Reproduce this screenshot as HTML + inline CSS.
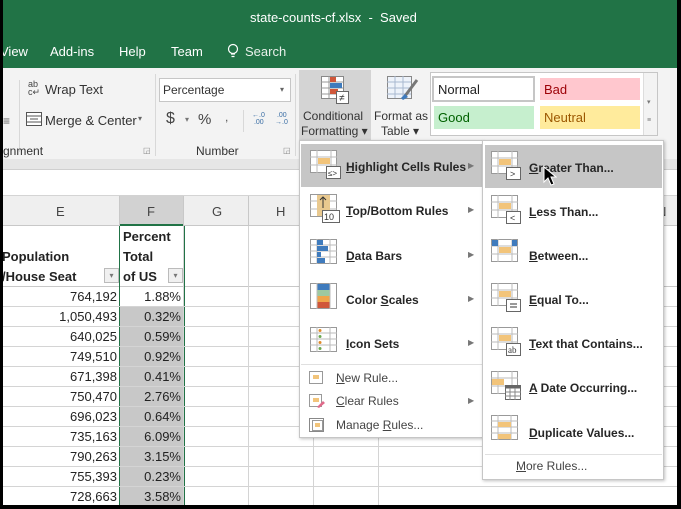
<!DOCTYPE html>
<html><head><meta charset="utf-8"><style>
*{margin:0;padding:0;box-sizing:border-box}
body{width:681px;height:509px;overflow:hidden;background:#000;font-family:"Liberation Sans",sans-serif;position:relative}
.a{position:absolute}
.t{position:absolute;white-space:nowrap}
.menu .t{font-size:12px;color:#262626}
.b{font-weight:bold}
u{text-decoration:underline}
.ic{position:absolute;width:32px;height:30px}
.arr{position:absolute;font-size:8px;color:#777}
</style></head><body>
<div class="a" style="left:3px;top:0;width:674px;height:505px;background:#fff;overflow:hidden">
<!-- title bar -->
<div class="a" style="left:0;top:0;width:674px;height:68px;background:#217346"></div>
<div class="t" style="left:247px;top:10px;color:#fff;font-size:13px">state-counts-cf.xlsx &nbsp;-&nbsp; Saved</div>
<div class="t" style="left:-3px;top:44px;color:#fff;font-size:13px">View</div>
<div class="t" style="left:47px;top:44px;color:#fff;font-size:13px">Add-ins</div>
<div class="t" style="left:116px;top:44px;color:#fff;font-size:13px">Help</div>
<div class="t" style="left:168px;top:44px;color:#fff;font-size:13px">Team</div>
<svg class="a" style="left:224px;top:43px" width="12" height="16"><circle cx="6" cy="6" r="4.5" fill="none" stroke="#fff" stroke-width="1.2"/><path d="M4 11h4M4.5 13.5h3" stroke="#fff" stroke-width="1.2"/></svg>
<div class="t" style="left:242px;top:44px;color:#e8f0ea;font-size:13px">Search</div>
<!-- ribbon -->
<div class="a" style="left:0;top:68px;width:674px;height:91px;background:#f3f3f3"></div>
<div class="a" style="left:16px;top:80px;width:1px;height:72px;background:#d8d8d8"></div>
<div class="a" style="left:152px;top:74px;width:1px;height:82px;background:#d8d8d8"></div>
<div class="a" style="left:292px;top:74px;width:1px;height:82px;background:#d8d8d8"></div>
<div class="t" style="left:0;top:114px;font-size:12px;color:#666">≡</div>
<div class="t" style="left:25px;top:80px;font-size:9px;color:#444;line-height:8px">ab<br>c↵</div>
<div class="t" style="left:42px;top:82px;font-size:13px;color:#333">Wrap Text</div>
<svg class="a" style="left:23px;top:112px" width="16" height="14"><rect x="0.5" y="0.5" width="15" height="13" fill="#fff" stroke="#555"/><path d="M0 4h16M0 10h16M4 7h8" stroke="#555"/></svg>
<div class="t" style="left:42px;top:113px;font-size:13px;color:#333">Merge &amp; Center</div>
<div class="t" style="left:135px;top:114px;font-size:8px;color:#666">▾</div>
<div class="t" style="left:0;top:144px;font-size:12px;color:#333">gnment</div>
<div class="t" style="left:140px;top:146px;font-size:8px;color:#888">◲</div>
<div class="a" style="left:156px;top:78px;width:132px;height:24px;background:#fff;border:1px solid #c6c6c6"></div>
<div class="t" style="left:160px;top:83px;font-size:12px;color:#333">Percentage</div>
<div class="t" style="left:277px;top:85px;font-size:8px;color:#666">▾</div>
<div class="t" style="left:163px;top:110px;font-size:16px;color:#444">$</div>
<div class="t" style="left:182px;top:115px;font-size:8px;color:#777">▾</div>
<div class="t" style="left:195px;top:111px;font-size:15px;color:#444">%</div>
<div class="t" style="left:222px;top:110px;font-size:12px;color:#555">,</div>
<div class="a" style="left:240px;top:110px;width:1px;height:22px;background:#d8d8d8"></div>
<div class="t" style="left:249px;top:112px;font-size:7px;color:#3a6ea5;line-height:7px">←.0<br>&nbsp;.00</div>
<div class="t" style="left:272px;top:112px;font-size:7px;color:#3a6ea5;line-height:7px">&nbsp;.00<br>→.0</div>
<div class="t" style="left:193px;top:144px;font-size:12px;color:#333">Number</div>
<div class="t" style="left:280px;top:146px;font-size:8px;color:#888">◲</div>
<!-- cond formatting button -->
<div class="a" style="left:296px;top:70px;width:72px;height:72px;background:#d4d4d4"></div>
<svg class="a" style="left:318px;top:76px" width="32" height="30"><rect x="0.5" y="0.5" width="22" height="22" fill="#fff" stroke="#888"/><path d="M0 6h22M0 12h22M0 18h22M8 0v22" stroke="#999"/><rect x="9" y="1" width="6" height="5" fill="#d0573a"/><rect x="9" y="7" width="12" height="5" fill="#3f7bbd"/><rect x="9" y="13" width="8" height="5" fill="#d0573a"/><rect x="15.5" y="15.5" width="12" height="12" fill="#fff" stroke="#666"/><text x="18" y="25" font-size="10" fill="#333" font-family="Liberation Sans">≠</text></svg>
<div class="t" style="left:300px;top:109px;font-size:12px;color:#333">Conditional</div>
<div class="t" style="left:298px;top:124px;font-size:12px;color:#333">Formatting ▾</div>
<svg class="a" style="left:384px;top:76px" width="32" height="30"><rect x="0.5" y="0.5" width="24" height="22" fill="#eef3fa" stroke="#888"/><path d="M0 6h24M0 12h24M0 18h24M8 0v22M16 0v22" stroke="#a8b8d0"/><path d="M30 4L18 20" stroke="#777" stroke-width="3"/><path d="M14 22l4-4 3 3-5 3z" fill="#3f7bbd"/></svg>
<div class="t" style="left:371px;top:109px;font-size:12px;color:#333">Format as</div>
<div class="t" style="left:378px;top:124px;font-size:12px;color:#333">Table ▾</div>
<!-- styles gallery -->
<div class="a" style="left:427px;top:72px;width:228px;height:64px;background:#fff;border:1px solid #c6c6c6"></div>
<div class="a" style="left:429px;top:76px;width:103px;height:26px;background:#fff;border:2px solid #c6c6c6"></div>
<div class="t" style="left:435px;top:82px;font-size:13px;color:#222">Normal</div>
<div class="a" style="left:537px;top:78px;width:100px;height:22px;background:#ffc7ce"></div>
<div class="t" style="left:541px;top:82px;font-size:13px;color:#9c0006">Bad</div>
<div class="a" style="left:431px;top:106px;width:100px;height:23px;background:#c6efce"></div>
<div class="t" style="left:435px;top:110px;font-size:13px;color:#006100">Good</div>
<div class="a" style="left:537px;top:106px;width:100px;height:23px;background:#ffeb9c"></div>
<div class="t" style="left:541px;top:110px;font-size:13px;color:#9c5700">Neutral</div>
<div class="a" style="left:640px;top:73px;width:14px;height:62px;background:#f3f3f3;border-left:1px solid #ddd"></div>
<div class="t" style="left:644px;top:98px;font-size:7px;color:#777">▾</div>
<div class="t" style="left:644px;top:117px;font-size:7px;color:#777">≡</div>
<!-- bands -->
<div class="a" style="left:0;top:159px;width:674px;height:11px;background:#e6e6e6;border-bottom:1px solid #cfcfcf"></div>
<div class="a" style="left:0;top:195px;width:674px;height:31px;background:#efefef;border-top:1px solid #d4d4d4;border-bottom:1px solid #c8c8c8"></div>
<div class="a" style="left:116px;top:195px;width:64px;height:31px;background:#d2d2d2;border-bottom:2px solid #217346"></div>
<div class="t" style="left:53px;top:204px;font-size:13px;color:#444">E</div>
<div class="t" style="left:144px;top:204px;font-size:13px;color:#444">F</div>
<div class="t" style="left:209px;top:204px;font-size:13px;color:#444">G</div>
<div class="t" style="left:273px;top:204px;font-size:13px;color:#444">H</div>
<div class="a" style="left:180px;top:196px;width:1px;height:30px;background:#c8c8c8"></div>
<div class="a" style="left:245px;top:196px;width:1px;height:30px;background:#c8c8c8"></div>
<div class="a" style="left:116px;top:196px;width:1px;height:30px;background:#c8c8c8"></div>
<!-- header cell -->
<div class="t b" style="left:-1px;top:249px;font-size:13px;color:#222">Population</div>
<div class="t b" style="left:-1px;top:269px;font-size:13px;color:#222">/House Seat</div>
<div class="a" style="left:101px;top:268px;width:15px;height:15px;background:#f0f0f0;border:1px solid #bbb;font-size:8px;color:#777;text-align:center;line-height:13px">▾</div>
<div class="t b" style="left:120px;top:229px;font-size:13px;color:#222">Percent</div>
<div class="t b" style="left:120px;top:249px;font-size:13px;color:#222">Total</div>
<div class="t b" style="left:120px;top:269px;font-size:13px;color:#222">of US</div>
<div class="a" style="left:165px;top:268px;width:15px;height:15px;background:#f0f0f0;border:1px solid #bbb;font-size:8px;color:#777;text-align:center;line-height:13px">▾</div>
<div class="a" style="left:0;top:286px;width:674px;height:1px;background:#c8c8c8"></div>
<!-- grid -->
<div id="g"></div>
<div class="a" style="left:116px;top:226px;width:1px;height:280px;background:#217346"></div>
<div class="a" style="left:180px;top:226px;width:2px;height:280px;background:#217346"></div>
<div class="a" style="left:180px;top:226px;width:1px;height:280px;background:#d4d4d4"></div>
<div class="a" style="left:245px;top:226px;width:1px;height:280px;background:#d4d4d4"></div>
<div class="a" style="left:117px;top:306px;width:63px;height:200px;background:#c8c8c8"></div>
<div style="position:absolute;left:0;top:287px;width:182px;font-size:13px;color:#222">
<div style="height:20px;border-bottom:1px solid #d4d4d4;position:relative"><span class="t" style="right:68px;top:2px">764,192</span><span class="t" style="right:4px;top:2px">1.88%</span></div>
<div style="height:20px;border-bottom:1px solid #d4d4d4;position:relative"><span class="t" style="right:68px;top:2px">1,050,493</span><span class="t" style="right:4px;top:2px">0.32%</span></div>
<div style="height:20px;border-bottom:1px solid #d4d4d4;position:relative"><span class="t" style="right:68px;top:2px">640,025</span><span class="t" style="right:4px;top:2px">0.59%</span></div>
<div style="height:20px;border-bottom:1px solid #d4d4d4;position:relative"><span class="t" style="right:68px;top:2px">749,510</span><span class="t" style="right:4px;top:2px">0.92%</span></div>
<div style="height:20px;border-bottom:1px solid #d4d4d4;position:relative"><span class="t" style="right:68px;top:2px">671,398</span><span class="t" style="right:4px;top:2px">0.41%</span></div>
<div style="height:20px;border-bottom:1px solid #d4d4d4;position:relative"><span class="t" style="right:68px;top:2px">750,470</span><span class="t" style="right:4px;top:2px">2.76%</span></div>
<div style="height:20px;border-bottom:1px solid #d4d4d4;position:relative"><span class="t" style="right:68px;top:2px">696,023</span><span class="t" style="right:4px;top:2px">0.64%</span></div>
<div style="height:20px;border-bottom:1px solid #d4d4d4;position:relative"><span class="t" style="right:68px;top:2px">735,163</span><span class="t" style="right:4px;top:2px">6.09%</span></div>
<div style="height:20px;border-bottom:1px solid #d4d4d4;position:relative"><span class="t" style="right:68px;top:2px">790,263</span><span class="t" style="right:4px;top:2px">3.15%</span></div>
<div style="height:20px;border-bottom:1px solid #d4d4d4;position:relative"><span class="t" style="right:68px;top:2px">755,393</span><span class="t" style="right:4px;top:2px">0.23%</span></div>
<div style="height:20px;position:relative"><span class="t" style="right:68px;top:2px">728,663</span><span class="t" style="right:4px;top:2px">3.58%</span></div>
</div>
<div style="position:absolute;left:182px;top:287px;width:492px">
<div style="height:20px;border-bottom:1px solid #d4d4d4"></div><div style="height:20px;border-bottom:1px solid #d4d4d4"></div><div style="height:20px;border-bottom:1px solid #d4d4d4"></div><div style="height:20px;border-bottom:1px solid #d4d4d4"></div><div style="height:20px;border-bottom:1px solid #d4d4d4"></div><div style="height:20px;border-bottom:1px solid #d4d4d4"></div><div style="height:20px;border-bottom:1px solid #d4d4d4"></div><div style="height:20px;border-bottom:1px solid #d4d4d4"></div><div style="height:20px;border-bottom:1px solid #d4d4d4"></div><div style="height:20px;border-bottom:1px solid #d4d4d4"></div>
</div>
<div class="a" style="left:375px;top:437px;width:1px;height:70px;background:#d4d4d4"></div>
<div class="a" style="left:310px;top:437px;width:1px;height:70px;background:#d4d4d4"></div>
<div class="t" style="left:654px;top:204px;font-size:13px;color:#444">N</div>
<!-- menu 1 -->
<div class="a menu" style="left:296px;top:140px;width:184px;height:298px;background:#fff;border:1px solid #c6c6c6;box-shadow:1px 1px 3px rgba(0,0,0,.25)">
<div class="a" style="left:1px;top:3px;width:181px;height:43px;background:#c6c6c6"></div>
<svg class="ic" style="left:10px;top:9px"><rect x="0.5" y="0.5" width="26" height="22" fill="#fff" stroke="#999"/><path d="M0 7h27M0 15h27M7 0v23M21 0v23" stroke="#bbb"/><rect x="8" y="8" width="12" height="6" fill="#f2c47a"/><rect x="16.5" y="16.5" width="14" height="12" fill="#fff" stroke="#666"/><text x="18" y="26" font-size="8" fill="#333" font-family="Liberation Sans">≤&gt;</text></svg>
<div class="t b" style="left:46px;top:19px"><u>H</u>ighlight Cells Rules</div><div class="arr" style="left:168px;top:20px">▶</div>
<svg class="ic" style="left:10px;top:53px"><rect x="0.5" y="0.5" width="26" height="22" fill="#fff" stroke="#999"/><path d="M0 7h27M0 15h27" stroke="#bbb"/><rect x="7" y="1" width="13" height="21" fill="#e9c98f"/><path d="M13 14V3M10 6l3-3 3 3" stroke="#333" fill="none"/><rect x="12.5" y="16.5" width="17" height="12" fill="#fff" stroke="#666"/><text x="14" y="26" font-size="9" fill="#333" font-family="Liberation Sans">10</text></svg>
<div class="t b" style="left:46px;top:63px"><u>T</u>op/Bottom Rules</div><div class="arr" style="left:168px;top:64px">▶</div>
<svg class="ic" style="left:10px;top:98px"><rect x="0.5" y="0.5" width="26" height="24" fill="#fff" stroke="#999"/><path d="M0 6h27M0 12h27M0 18h27M7 0v25M20 0v25" stroke="#bbb"/><rect x="7" y="1" width="6" height="5" fill="#3f7bbd"/><rect x="7" y="7" width="11" height="5" fill="#3f7bbd"/><rect x="7" y="13" width="4" height="5" fill="#3f7bbd"/><rect x="7" y="19" width="8" height="5" fill="#3f7bbd"/></svg>
<div class="t b" style="left:46px;top:108px"><u>D</u>ata Bars</div><div class="arr" style="left:168px;top:109px">▶</div>
<svg class="ic" style="left:10px;top:142px"><rect x="0.5" y="0.5" width="26" height="25" fill="#fff" stroke="#999"/><rect x="7" y="1" width="13" height="6" fill="#3f7bbd"/><rect x="7" y="7" width="13" height="6" fill="#9ec9a0"/><rect x="7" y="13" width="13" height="6" fill="#f0a54a"/><rect x="7" y="19" width="13" height="6" fill="#d0573a"/><path d="M7 0v26M20 0v26" stroke="#bbb"/></svg>
<div class="t b" style="left:46px;top:152px">Color <u>S</u>cales</div><div class="arr" style="left:168px;top:153px">▶</div>
<svg class="ic" style="left:10px;top:186px"><rect x="0.5" y="0.5" width="26" height="24" fill="#fff" stroke="#999"/><path d="M0 6h27M0 12h27M0 18h27M7 0v25M20 0v25" stroke="#bbb"/><circle cx="10" cy="3.5" r="1.5" fill="#e08a2a"/><circle cx="10" cy="9.5" r="1.5" fill="#6aa84f"/><circle cx="10" cy="15.5" r="1.5" fill="#e08a2a"/><circle cx="10" cy="21.5" r="1.5" fill="#6aa84f"/></svg>
<div class="t b" style="left:46px;top:196px"><u>I</u>con Sets</div><div class="arr" style="left:168px;top:197px">▶</div>
<div class="a" style="left:1px;top:223px;width:181px;height:1px;background:#e0e0e0"></div>
<svg class="a" style="left:9px;top:230px" width="14" height="13"><rect x="0.5" y="0.5" width="13" height="12" fill="#fff" stroke="#999"/><rect x="4" y="4" width="6" height="4" fill="#f2c47a"/></svg>
<div class="t" style="left:36px;top:230px;color:#444"><u>N</u>ew Rule...</div>
<svg class="a" style="left:9px;top:253px" width="16" height="14"><rect x="0.5" y="0.5" width="12" height="12" fill="#fff" stroke="#999"/><rect x="4" y="4" width="6" height="4" fill="#f2c47a"/><path d="M8 13l6-6 2 2-6 5z" fill="#e06a8a"/></svg>
<div class="t" style="left:36px;top:253px;color:#444"><u>C</u>lear Rules</div><div class="arr" style="left:168px;top:255px">▶</div>
<svg class="a" style="left:9px;top:277px" width="16" height="14"><rect x="0.5" y="0.5" width="14" height="13" fill="#fff" stroke="#888"/><rect x="3.5" y="2.5" width="10" height="10" fill="#fff" stroke="#999"/><rect x="6" y="5" width="5" height="4" fill="#f2c47a"/></svg>
<div class="t" style="left:36px;top:277px;color:#444">Manage <u>R</u>ules...</div>
</div>
<!-- menu 2 -->
<div class="a menu" style="left:479px;top:140px;width:182px;height:340px;background:#fff;border:1px solid #c6c6c6;box-shadow:1px 1px 3px rgba(0,0,0,.25)">
<div class="a" style="left:2px;top:4px;width:177px;height:43px;background:#c6c6c6"></div>
<svg class="ic" style="left:8px;top:10px"><rect x="0.5" y="0.5" width="26" height="22" fill="#fff" stroke="#999"/><path d="M0 7h27M0 15h27M7 0v23M21 0v23" stroke="#bbb"/><rect x="8" y="8" width="12" height="6" fill="#f2c47a"/><rect x="15.5" y="16.5" width="14" height="12" fill="#fff" stroke="#666"/><text x="19" y="26" font-size="9" fill="#333" font-family="Liberation Sans">&gt;</text></svg>
<div class="t b" style="left:46px;top:20px"><u>G</u>reater Than...</div>
<svg class="a" style="left:60px;top:25px" width="14" height="22"><path d="M1 1v15l4-4 3 7 3-1-3-7h5z" fill="#000" stroke="#fff"/></svg>
<svg class="ic" style="left:8px;top:54px"><rect x="0.5" y="0.5" width="26" height="22" fill="#fff" stroke="#999"/><path d="M0 7h27M0 15h27M7 0v23M21 0v23" stroke="#bbb"/><rect x="8" y="8" width="12" height="6" fill="#f2c47a"/><rect x="15.5" y="16.5" width="14" height="12" fill="#fff" stroke="#666"/><text x="19" y="26" font-size="9" fill="#333" font-family="Liberation Sans">&lt;</text></svg>
<div class="t b" style="left:46px;top:64px"><u>L</u>ess Than...</div>
<svg class="ic" style="left:8px;top:98px"><rect x="0.5" y="0.5" width="26" height="22" fill="#fff" stroke="#999"/><path d="M0 7h27M0 15h27M7 0v23M21 0v23" stroke="#bbb"/><rect x="1" y="1" width="6" height="6" fill="#3f7bbd"/><rect x="21" y="1" width="5" height="6" fill="#3f7bbd"/><rect x="8" y="8" width="12" height="6" fill="#f2c47a"/></svg>
<div class="t b" style="left:46px;top:108px"><u>B</u>etween...</div>
<svg class="ic" style="left:8px;top:142px"><rect x="0.5" y="0.5" width="26" height="22" fill="#fff" stroke="#999"/><path d="M0 7h27M0 15h27M7 0v23M21 0v23" stroke="#bbb"/><rect x="8" y="8" width="12" height="6" fill="#f2c47a"/><rect x="15.5" y="16.5" width="14" height="12" fill="#fff" stroke="#666"/><path d="M19 21h7M19 24h7" stroke="#333"/></svg>
<div class="t b" style="left:46px;top:152px"><u>E</u>qual To...</div>
<svg class="ic" style="left:8px;top:186px"><rect x="0.5" y="0.5" width="26" height="22" fill="#fff" stroke="#999"/><path d="M0 7h27M0 15h27M7 0v23M21 0v23" stroke="#bbb"/><rect x="8" y="8" width="12" height="6" fill="#f2c47a"/><rect x="15.5" y="16.5" width="14" height="12" fill="#fff" stroke="#666"/><text x="17" y="26" font-size="9" fill="#333" font-family="Liberation Serif">ab</text></svg>
<div class="t b" style="left:46px;top:196px"><u>T</u>ext that Contains...</div>
<svg class="ic" style="left:8px;top:230px"><rect x="0.5" y="0.5" width="26" height="22" fill="#fff" stroke="#999"/><path d="M0 7h27M0 15h27M7 0v23M21 0v23" stroke="#bbb"/><rect x="1" y="8" width="12" height="6" fill="#f2c47a"/><rect x="14.5" y="14.5" width="15" height="14" fill="#fff" stroke="#666"/><rect x="14.5" y="14.5" width="15" height="3" fill="#666"/><path d="M14 21h16M14 25h16M19 17v12M24 17v12" stroke="#888"/></svg>
<div class="t b" style="left:46px;top:240px"><u>A</u> Date Occurring...</div>
<svg class="ic" style="left:8px;top:274px"><rect x="0.5" y="0.5" width="26" height="24" fill="#fff" stroke="#999"/><path d="M0 6h27M0 12h27M0 18h27M7 0v25M20 0v25" stroke="#bbb"/><rect x="7" y="7" width="13" height="5" fill="#f2c47a"/><rect x="7" y="19" width="13" height="5" fill="#f2c47a"/></svg>
<div class="t b" style="left:46px;top:285px"><u>D</u>uplicate Values...</div>
<div class="a" style="left:2px;top:313px;width:177px;height:1px;background:#e0e0e0"></div>
<div class="t" style="left:33px;top:318px;color:#444"><u>M</u>ore Rules...</div>
</div>
</div>
</body></html>
